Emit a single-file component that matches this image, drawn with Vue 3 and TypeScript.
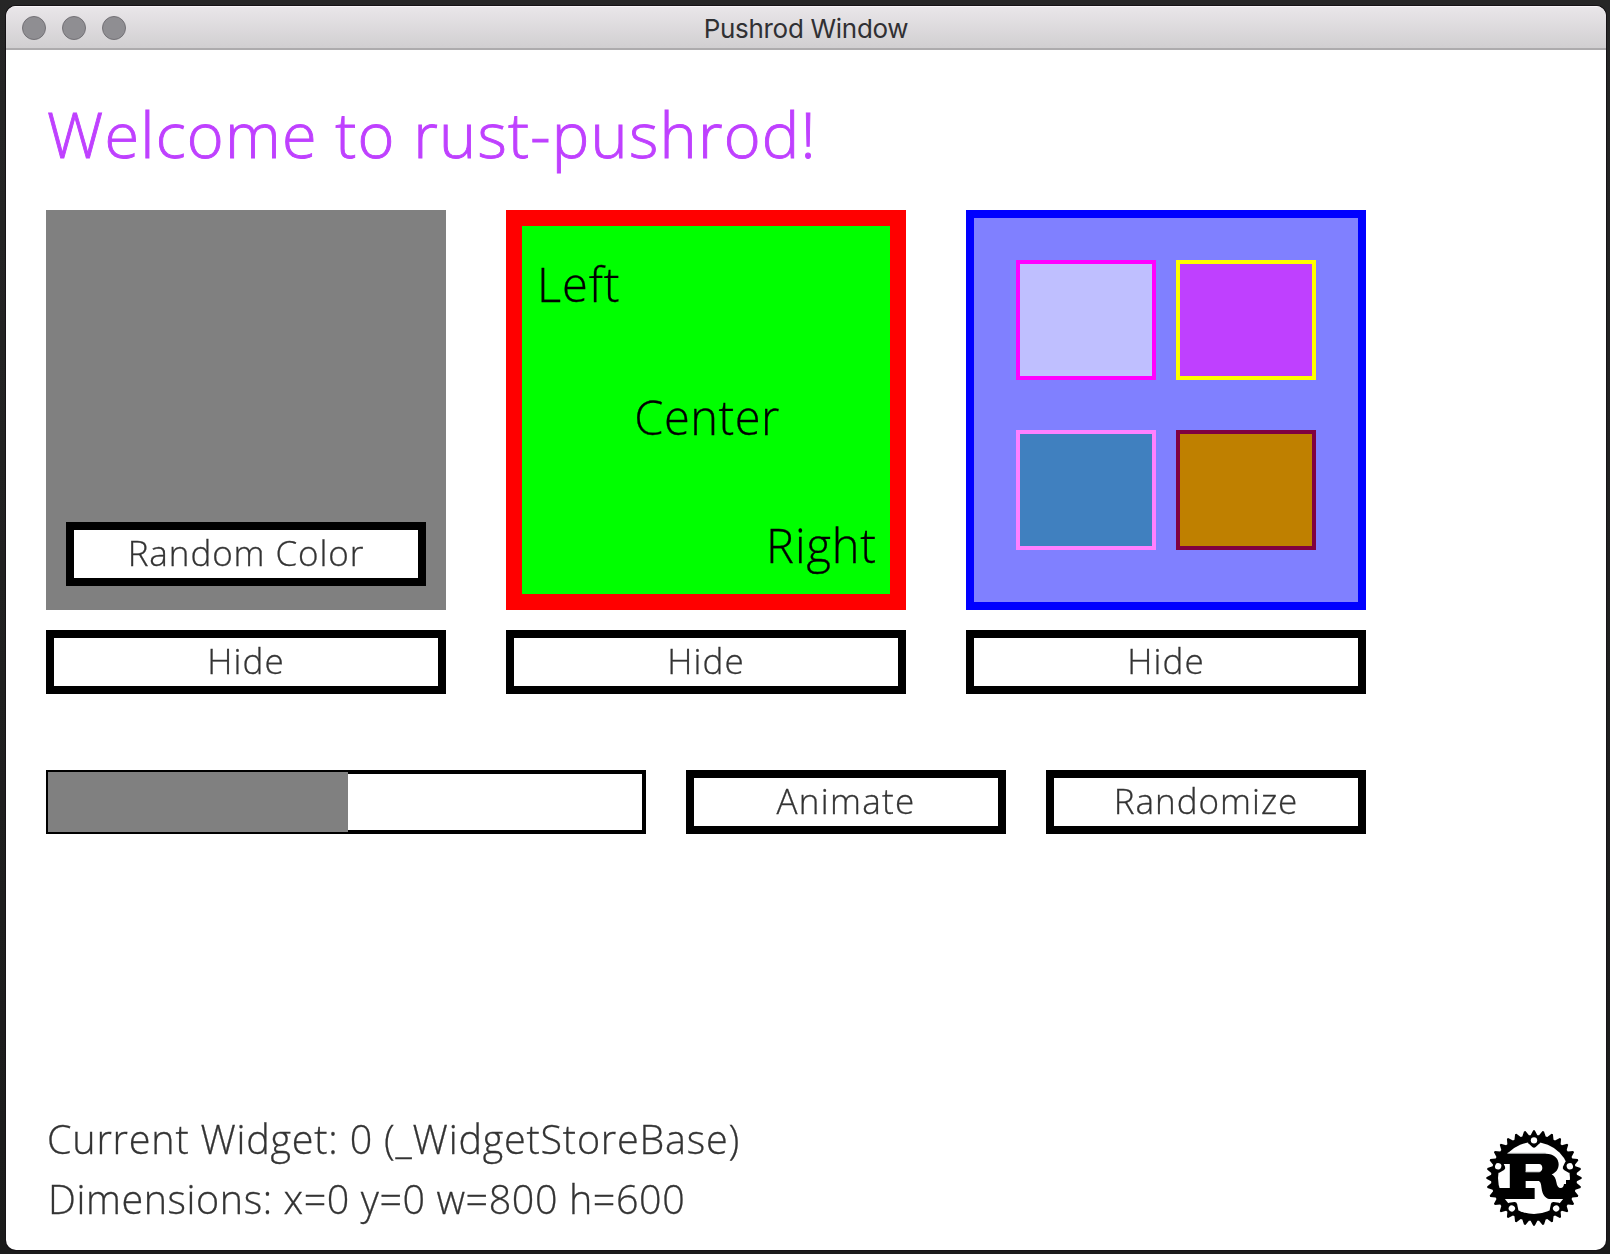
<script setup lang="ts">
interface Swatch {
  name: string
  fill: string
  edge: string
}

const swatches: Swatch[] = [
  { name: 'lavender', fill: '#bfbfff', edge: '#ff00ff' },
  { name: 'violet', fill: '#bf40ff', edge: '#ffff00' },
  { name: 'steel', fill: '#4080bf', edge: '#ff80ff' },
  { name: 'ochre', fill: '#bf8000', edge: '#800040' },
]

const progress = 50

// Gear outline centred on the origin: 32 pointed teeth.
const teeth = 32
const gear = Array.from({ length: teeth }, (_, i) => {
  const at = (r: number, k: number) => {
    const a = ((i + k) / teeth) * Math.PI * 2
    return `${(r * Math.sin(a)).toFixed(2)},${(-r * Math.cos(a)).toFixed(2)}`
  }
  return [at(129, -0.4), at(143, -0.08), at(143, 0.08), at(129, 0.4)].join(' ')
}).join(' ')

const lugs = [0, 72, 144, 216, 288]
</script>

<template>
  <div class="desktop">
    <div class="window">
      <header class="titlebar">
        <div class="lights"><i></i><i></i><i></i></div>
        <span class="caption">Pushrod Window</span>
      </header>

      <main class="content">
        <h1 class="welcome">Welcome to rust-pushrod!</h1>

        <div class="panels">
          <section class="column">
            <div class="panel gray">
              <button class="btn random"><span>Random Color</span></button>
            </div>
            <button class="btn"><span>Hide</span></button>
          </section>
          <section class="column">
            <div class="panel green">
              <span class="left">Left</span>
              <span class="center">Center</span>
              <span class="right">Right</span>
            </div>
            <button class="btn"><span>Hide</span></button>
          </section>
          <section class="column">
            <div class="panel blue">
              <div
                v-for="s in swatches"
                :key="s.name"
                class="swatch"
                :style="{ background: s.fill, borderColor: s.edge }"
              ></div>
            </div>
            <button class="btn"><span>Hide</span></button>
          </section>
        </div>

        <div class="controls">
          <div class="progress"><div class="bar" :style="{ width: progress + '%' }"></div></div>
          <button class="btn animate"><span>Animate</span></button>
          <button class="btn randomize"><span>Randomize</span></button>
        </div>

        <footer class="footer">
          <div class="status">
            <p class="current">Current Widget: 0 (_WidgetStoreBase)</p>
            <p class="dims">Dimensions: x=0 y=0 w=800 h=600</p>
          </div>
          <svg class="logo" viewBox="42 54 300 300" aria-hidden="true">
            <g transform="translate(192 204)">
              <polygon :points="gear" />
              <circle r="108" fill="#fff" />
              <g v-for="a in lugs" :key="a" :transform="`rotate(${a})`">
                <path d="M-20-112L-17-104L-5-93Q0-89 5-93L17-104L20-112Z" />
              </g>
            </g>
            <g fill="#c8cccc">
              <rect x="113" y="128" width="114" height="4" />
              <rect x="117" y="160" width="4" height="74" />
            </g>
            <path
              fill-rule="evenodd"
              d="M96 131H228C250 131 266 144 266 163C266 178 257 189 245 193C254 198 257 206 259 216C261 228 265 234 272 234C279 234 281 229 282 222H288V210H304V240L284 267H237C223 263 217 250 215 236C213 221 212 213 203 213H167V234H194V267H98L80 234H120V162H86ZM167 162V186H207C213 186 217 181 217 174C217 167 213 162 207 162Z"
            />
            <rect x="167" y="184" width="42" height="3" fill="#c8cccc" />
            <g transform="translate(192 204)" fill="#fff">
              <circle v-for="a in lugs" :key="a" r="9.5" cy="-113" :transform="`rotate(${a})`" />
            </g>
          </svg>
        </footer>
      </main>
    </div>
  </div>
</template>

<style>
html,
body {
  margin: 0;
  background: #222;
}
</style>

<style scoped>
.desktop {
  box-sizing: border-box;
  width: 1610px;
  height: 1254px;
  padding: 6px 4px 4px 6px;
  overflow: hidden;
  background: linear-gradient(#262626, #1b1b1b);
  font-family: 'Open Sans', 'Noto Sans', sans-serif;
  font-weight: 300;
  color: #000;
}
.window {
  height: 1244px;
  display: flex;
  flex-direction: column;
  border-radius: 10px;
  overflow: hidden;
  background: #fff;
  box-shadow: 0 0 0 1px #151215;
}
.titlebar {
  box-sizing: border-box;
  height: 44px;
  flex: none;
  display: grid;
  grid-template-columns: 1fr auto 1fr;
  align-items: center;
  border-top: 1px solid #f8f5f8;
  border-bottom: 2px solid #adabad;
  background: linear-gradient(#e9e6e9, #d1cfd1);
}
.lights {
  display: flex;
  gap: 16px;
  padding-left: 16px;
}
.lights i {
  box-sizing: border-box;
  width: 24px;
  height: 24px;
  border: 1px solid #737176;
  border-radius: 50%;
  background: #8f8e92;
}
.caption {
  padding-top: 2px;
  font: 400 26px/39px Inter, sans-serif;
  letter-spacing: -0.3px;
  color: #303033;
}
.content {
  flex: 1;
  display: flex;
  flex-direction: column;
  padding: 40px 22px 22px 40px;
}
.welcome {
  margin: 0;
  padding-left: 1px;
  height: 120px;
  font-size: 63px;
  font-weight: 300;
  line-height: 88px;
  letter-spacing: 1.22px;
  color: #bf40ff;
  -webkit-text-stroke: 0.9px #bf40ff;
  white-space: nowrap;
}
.panels {
  display: flex;
  gap: 60px;
}
.column {
  width: 400px;
  display: flex;
  flex-direction: column;
  gap: 20px;
}
.panel {
  box-sizing: border-box;
  height: 400px;
}
.btn {
  box-sizing: border-box;
  height: 64px;
  margin: 0;
  padding: 0 0 2px;
  display: flex;
  align-items: center;
  justify-content: center;
  border: 8px solid #000;
  border-radius: 0;
  background: #fff;
  font: 300 35px/46px 'Open Sans', 'Noto Sans', sans-serif;
  letter-spacing: 1.1px;
  color: #333;
  white-space: nowrap;
}
.btn.random {
  letter-spacing: 0.92px;
}
.btn.animate {
  letter-spacing: 1.3px;
}
.btn.randomize {
  letter-spacing: 1px;
}
.welcome,
.btn span,
.green span,
.status p {
  filter: blur(0.5px);
}
.btn span,
.green span,
.status p {
  -webkit-text-stroke-width: 0.3px;
}
.gray {
  display: flex;
  flex-direction: column;
  justify-content: flex-end;
  padding: 0 20px 24px;
  background: #808080;
}
.green {
  display: flex;
  flex-direction: column;
  justify-content: space-between;
  padding: 25px 13px 16px 15px;
  border: 16px solid #f00;
  background: #0f0;
  font-size: 47px;
  line-height: 66px;
  letter-spacing: 0.9px;
}
.center {
  align-self: center;
  padding-top: 4px;
  letter-spacing: 0.5px;
}
.right {
  align-self: flex-end;
}
.blue {
  display: grid;
  grid-template-columns: 140px 140px;
  grid-template-rows: 120px 120px;
  gap: 50px 20px;
  padding: 42px;
  border: 8px solid #00f;
  background: #8080ff;
}
.swatch {
  border: 4px solid;
}
.controls {
  display: flex;
  gap: 40px;
  margin-top: 76px;
}
.progress {
  box-sizing: border-box;
  width: 600px;
  height: 64px;
  padding: 2px 0 2px 2px;
  background: #fff;
  box-shadow: inset 0 0 0 4px #000;
}
.bar {
  box-sizing: content-box;
  height: 60px;
  padding-right: 1px;
  background: #808080;
}
.animate,
.randomize {
  width: 320px;
}
.footer {
  margin-top: auto;
  display: flex;
  justify-content: space-between;
  align-items: flex-end;
}
.status {
  margin-bottom: -1px;
  color: #333;
}
.status p {
  margin: 0;
  padding-left: 1px;
  font-size: 39.5px;
  line-height: 60px;
  white-space: nowrap;
}
.status .current {
  letter-spacing: 0.8px;
}
.status .dims {
  padding-left: 2px;
  letter-spacing: 0.57px;
}
.logo {
  width: 100px;
  height: 100px;
}
</style>
